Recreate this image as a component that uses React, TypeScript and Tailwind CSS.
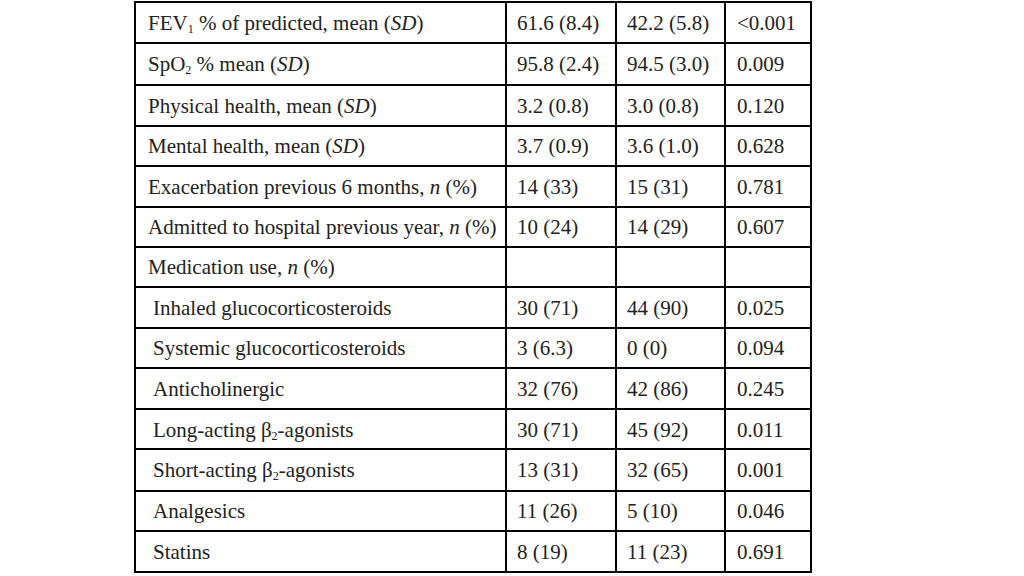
type Row = {
  label: React.ReactNode;
  a: string;
  b: string;
  p: string;
  indent?: boolean;
};

const n = <i>n</i>;
const sd = <i>SD</i>;

const ROWS: Row[] = [
  { label: <>FEV<sub className="text-[12px]">1</sub> % of predicted, mean ({sd})</>, a: "61.6 (8.4)", b: "42.2 (5.8)", p: "<0.001" },
  { label: <>SpO<sub className="text-[12px]">2</sub> % mean ({sd})</>, a: "95.8 (2.4)", b: "94.5 (3.0)", p: "0.009" },
  { label: <>Physical health, mean ({sd})</>, a: "3.2 (0.8)", b: "3.0 (0.8)", p: "0.120" },
  { label: <>Mental health, mean ({sd})</>, a: "3.7 (0.9)", b: "3.6 (1.0)", p: "0.628" },
  { label: <>Exacerbation previous 6 months, {n} (%)</>, a: "14 (33)", b: "15 (31)", p: "0.781" },
  { label: <>Admitted to hospital previous year, {n} (%)</>, a: "10 (24)", b: "14 (29)", p: "0.607" },
  { label: <>Medication use, {n} (%)</>, a: "", b: "", p: "" },
  { label: "Inhaled glucocorticosteroids", a: "30 (71)", b: "44 (90)", p: "0.025", indent: true },
  { label: "Systemic glucocorticosteroids", a: "3 (6.3)", b: "0 (0)", p: "0.094", indent: true },
  { label: "Anticholinergic", a: "32 (76)", b: "42 (86)", p: "0.245", indent: true },
  { label: <>Long-acting β<sub className="text-[12px]">2</sub>-agonists</>, a: "30 (71)", b: "45 (92)", p: "0.011", indent: true },
  { label: <>Short-acting β<sub className="text-[12px]">2</sub>-agonists</>, a: "13 (31)", b: "32 (65)", p: "0.001", indent: true },
  { label: "Analgesics", a: "11 (26)", b: "5 (10)", p: "0.046", indent: true },
  { label: "Statins", a: "8 (19)", b: "11 (23)", p: "0.691", indent: true },
];

export default function App() {
  return (
    <div className="w-[1024px] h-[576px] overflow-hidden bg-white font-['Liberation_Serif',serif] text-[21px] text-[#222]">
      <div className="mt-[0.5px] ml-[134px] w-[678px] grid grid-cols-[369px_108px_107px_84px] grid-rows-[39.8px_39.7px_39px_38px_38.7px_38px_38.3px_38.7px_38px_39.6px_38px_39.7px_38px_39px] gap-[2px] p-[2px] bg-black">
        {ROWS.map((r, i) => (
          <div key={i} className="contents">
            <div className={`bg-white flex items-center pt-[2px] whitespace-nowrap ${r.indent ? "pl-[17px]" : "pl-[12px]"}`}>
              <span>{r.label}</span>
            </div>
            <div className="bg-white flex items-center pt-[2px] pl-[10px] whitespace-nowrap">{r.a}</div>
            <div className="bg-white flex items-center pt-[2px] pl-[10px] whitespace-nowrap">{r.b}</div>
            <div className="bg-white flex items-center pt-[2px] pl-[11px] whitespace-nowrap">{r.p}</div>
          </div>
        ))}
      </div>
    </div>
  );
}
